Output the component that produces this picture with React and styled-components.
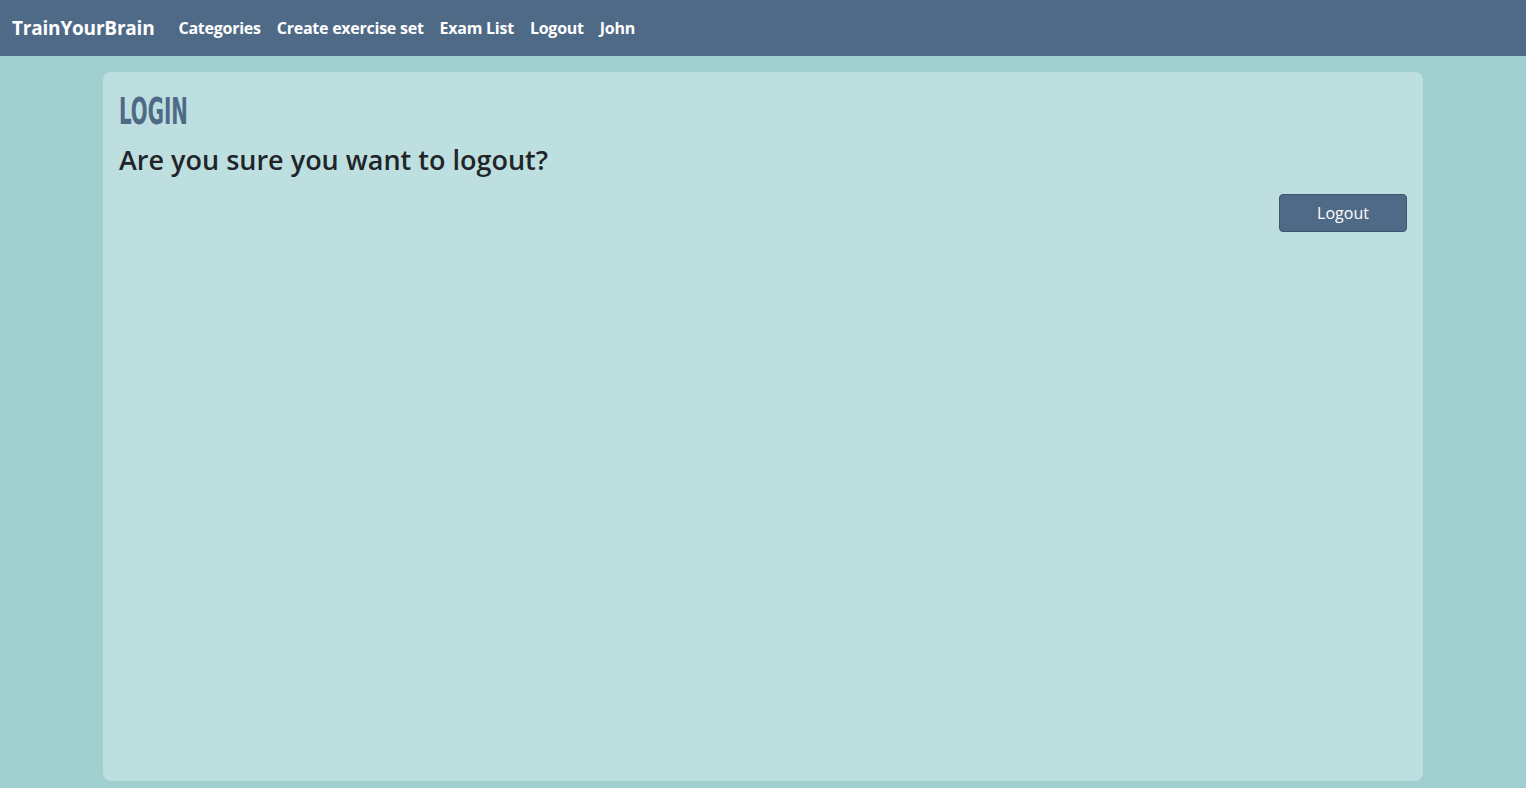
import React from 'react'
import styled, { createGlobalStyle } from 'styled-components'

const GlobalStyle = createGlobalStyle`
  * {
    box-sizing: border-box;
  }

  body {
    margin: 0;
    background: #a1cecf;
    font-family: 'Open Sans', 'Noto Sans', sans-serif;
    color: #212529;
  }
`

const Page = styled.div`
  min-height: 100vh;
  display: flex;
  flex-direction: column;
`

const Navbar = styled.nav`
  height: 56px;
  background: #4f6a87;
  display: flex;
  align-items: center;
  padding: 0 12px;
`

const Brand = styled.a`
  color: #fff;
  font-size: 19px;
  font-weight: 700;
  margin-right: 16px;
  letter-spacing: -0.2px;
  text-decoration: none;
  cursor: pointer;
`

const NavLinks = styled.div`
  display: flex;
  align-items: center;
`

const NavLink = styled.a`
  color: #fff;
  font-size: 16px;
  font-weight: 700;
  padding: 8px;
  letter-spacing: -0.25px;
  text-decoration: none;
  cursor: pointer;
`

const Container = styled.main`
  width: 1320px;
  margin: 16px auto 7px;
  flex: 1;
  background: #bedfdf;
  border-radius: 8px;
  padding: 16px;
  display: flex;
  flex-direction: column;
`

const Title = styled.h1`
  margin: 0;
  font-family: 'Liberation Sans Narrow', 'DejaVu Sans Condensed', sans-serif;
  font-size: 38px;
  line-height: 46px;
  font-weight: 700;
  color: #4f6a87;
  transform: scaleX(0.58);
  transform-origin: left center;
`

const Question = styled.h3`
  margin: 10px 0 18px;
  font-size: 27px;
  font-weight: 600;
  line-height: 32px;
`

const Actions = styled.div`
  display: flex;
  justify-content: flex-end;
`

const Button = styled.button`
  width: 128px;
  height: 38px;
  background: #4f6a87;
  border: 1px solid #3d5570;
  border-radius: 4px;
  color: #fff;
  font-family: inherit;
  font-size: 16px;
  cursor: pointer;
`

const links = ['Categories', 'Create exercise set', 'Exam List', 'Logout', 'John']

export default function App() {
  return (
    <Page>
      <GlobalStyle />
      <Navbar>
        <Brand>TrainYourBrain</Brand>
        <NavLinks>
          {links.map(l => (
            <NavLink key={l}>{l}</NavLink>
          ))}
        </NavLinks>
      </Navbar>
      <Container>
        <Title>LOGIN</Title>
        <Question>Are you sure you want to logout?</Question>
        <Actions>
          <Button>Logout</Button>
        </Actions>
      </Container>
    </Page>
  )
}
